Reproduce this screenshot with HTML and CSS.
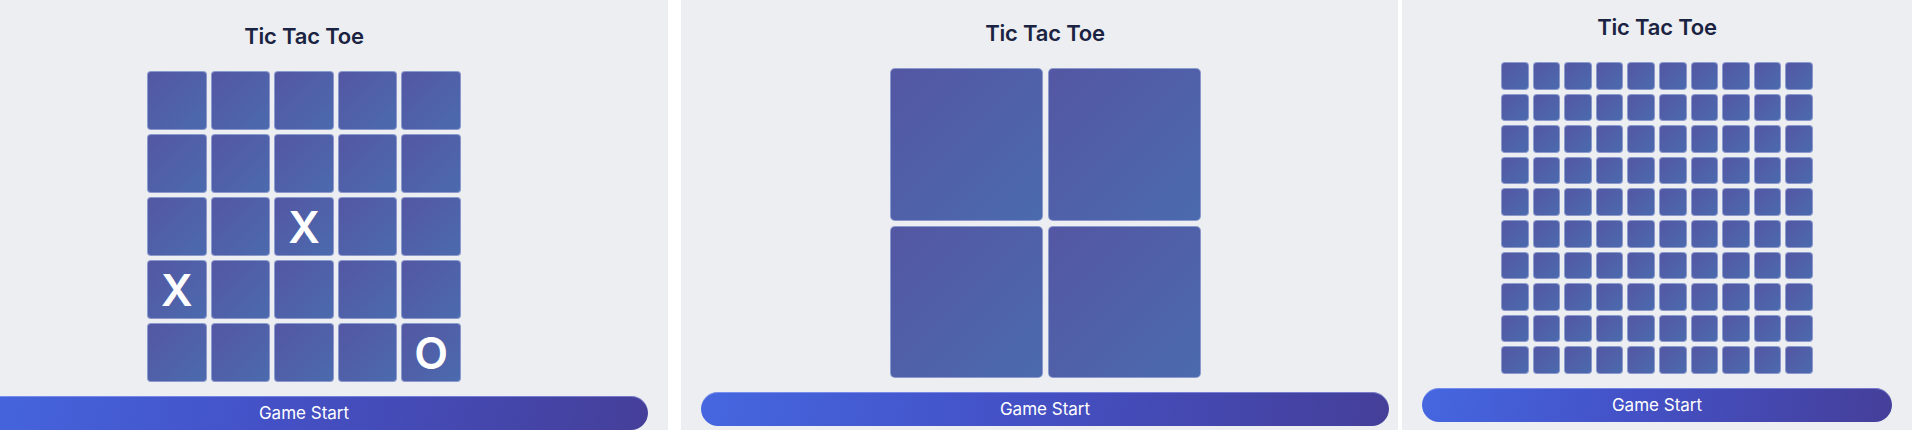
FILE: index.html
```html
<!DOCTYPE html>
<html lang="en">
<head>
<meta charset="utf-8">
<title>Tic Tac Toe</title>
<link rel="stylesheet" href="styles.css">
</head>
<body>
<div class="strip">
  <div class="frame frame-a">
    <section class="panel panel-a">
      <h1 class="title">Tic Tac Toe</h1>
      <div class="board board-5">
        <div class="cell"></div><div class="cell"></div><div class="cell"></div><div class="cell"></div><div class="cell"></div>
        <div class="cell"></div><div class="cell"></div><div class="cell"></div><div class="cell"></div><div class="cell"></div>
        <div class="cell"></div><div class="cell"></div><div class="cell">X</div><div class="cell"></div><div class="cell"></div>
        <div class="cell">X</div><div class="cell"></div><div class="cell"></div><div class="cell"></div><div class="cell"></div>
        <div class="cell"></div><div class="cell"></div><div class="cell"></div><div class="cell"></div><div class="cell">O</div>
      </div>
      <button class="start">Game Start</button>
    </section>
  </div>
  <div class="frame frame-b">
    <section class="panel panel-b">
      <h1 class="title">Tic Tac Toe</h1>
      <div class="board board-2">
        <div class="cell"></div><div class="cell"></div>
        <div class="cell"></div><div class="cell"></div>
      </div>
      <button class="start">Game Start</button>
    </section>
  </div>
  <div class="frame frame-c">
    <section class="panel panel-c">
      <h1 class="title">Tic Tac Toe</h1>
      <div class="board board-10" id="b10"></div>
      <button class="start">Game Start</button>
    </section>
  </div>
</div>
<script src="app.js"></script>
</body>
</html>
```
FILE: styles.css
```css
html, body {
  margin: 0;
  padding: 0;
  background: #ffffff;
  overflow: hidden;
}
body {
  font-family: Inter, "Noto Sans", "Liberation Sans", sans-serif;
}
.strip {
  display: flex;
  height: 430px;
}
.frame {
  height: 430px;
  overflow: hidden;
  flex: none;
  background: #eceef1;
}
.frame-a { width: 668px; }
.frame-b { width: 717px; margin-left: 13px; }
.frame-c { width: 510px; margin-left: 4px; }

.panel {
  box-sizing: border-box;
  display: flex;
  flex-direction: column;
  align-items: center;
  padding: 15px 20px 0;
  background: #eceef1;
  height: 430px;
}
.panel-a { width: 728px; margin-left: -60px; padding-top: 24px; }
.panel-b { width: 728px; padding-top: 21px; }
.panel-c { width: 510px; padding-top: 15px; }

.title {
  margin: 0;
  font-size: 22px;
  line-height: 24px;
  font-weight: 600;
  color: #1a2341;
  letter-spacing: -0.2px;
}
.board {
  margin-top: 23px;
  width: 312px;
  height: 312px;
  display: grid;
  gap: 4px;
}
.board-5 { width: 314px; height: 314px; grid-template-columns: repeat(5, 1fr); grid-template-rows: repeat(5, 1fr); }
.board-2 { width: 311px; height: 310px; grid-template-columns: repeat(2, 1fr); grid-template-rows: repeat(2, 1fr); gap: 5px; }
.board-10 { grid-template-columns: repeat(10, 1fr); grid-template-rows: repeat(10, 1fr); }

.cell {
  box-sizing: border-box;
  border-radius: 4px;
  background: linear-gradient(135deg, #5457a3 0%, #4b6aae 100%);
  border: 1px solid rgba(190, 200, 235, 0.55);
  display: flex;
  align-items: center;
  justify-content: center;
  color: #ffffff;
  font-size: 44px;
  font-weight: 600;
  line-height: 1;
}
.board-10 .cell { border-radius: 4px; }
.board-2 .cell { border-radius: 5px; }

.start {
  margin-top: 14px;
  width: 100%;
  height: 34px;
  flex: none;
  border: none;
  border-radius: 17px;
  background: linear-gradient(100deg, #4567e0 0%, #4451c6 45%, #453f99 100%);
  box-shadow: inset 0 1px 0 rgba(180, 195, 255, 0.45);
  color: #ffffff;
  font-family: Inter, "Noto Sans", "Liberation Sans", sans-serif;
  font-size: 17px;
  font-weight: 400;
  padding: 0;
}
```
FILE: app.js
```js
var b = document.getElementById('b10');
for (var i = 0; i < 100; i++) {
  var c = document.createElement('div');
  c.className = 'cell';
  b.appendChild(c);
}
```
